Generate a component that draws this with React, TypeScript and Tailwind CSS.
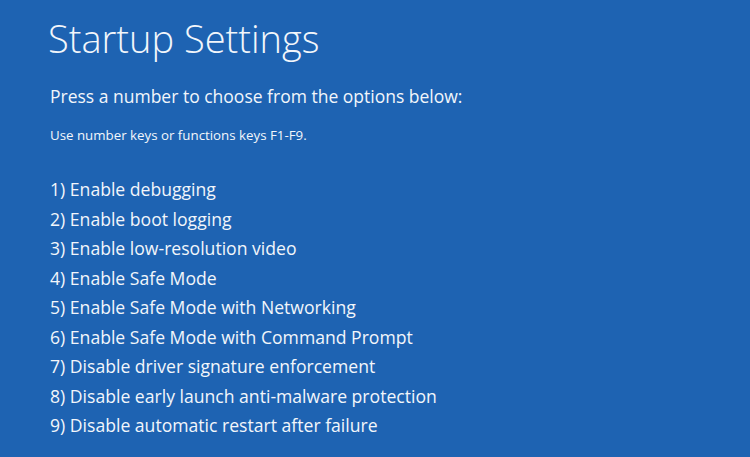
export default function App() {
  const items = [
    "1) Enable debugging",
    "2) Enable boot logging",
    "3) Enable low-resolution video",
    "4) Enable Safe Mode",
    "5) Enable Safe Mode with Networking",
    "6) Enable Safe Mode with Command Prompt",
    "7) Disable driver signature enforcement",
    "8) Disable early launch anti-malware protection",
    "9) Disable automatic restart after failure",
  ];
  return (
    <div
      className="w-[750px] h-[457px] overflow-hidden bg-[#1e63b2] text-[#f2f6fb] pl-[48px]"
      style={{ fontFamily: '"Open Sans", "Noto Sans", sans-serif' }}
    >
      <div className="pt-[12px] text-[38px] leading-[52px] font-light">Startup Settings</div>
      <div className="pl-[2px] mt-[20px] text-[17.5px] leading-[24px]">Press a number to choose from the options below:</div>
      <div className="pl-[2px] mt-[18px] text-[13.3px] leading-[18px]">Use number keys or functions keys F1-F9.</div>
      <div className="pl-[2px] mt-[31px] flex flex-col">
        {items.map((t) => (
          <div key={t} className="text-[17.6px] leading-[29.5px]">{t}</div>
        ))}
      </div>
    </div>
  );
}
